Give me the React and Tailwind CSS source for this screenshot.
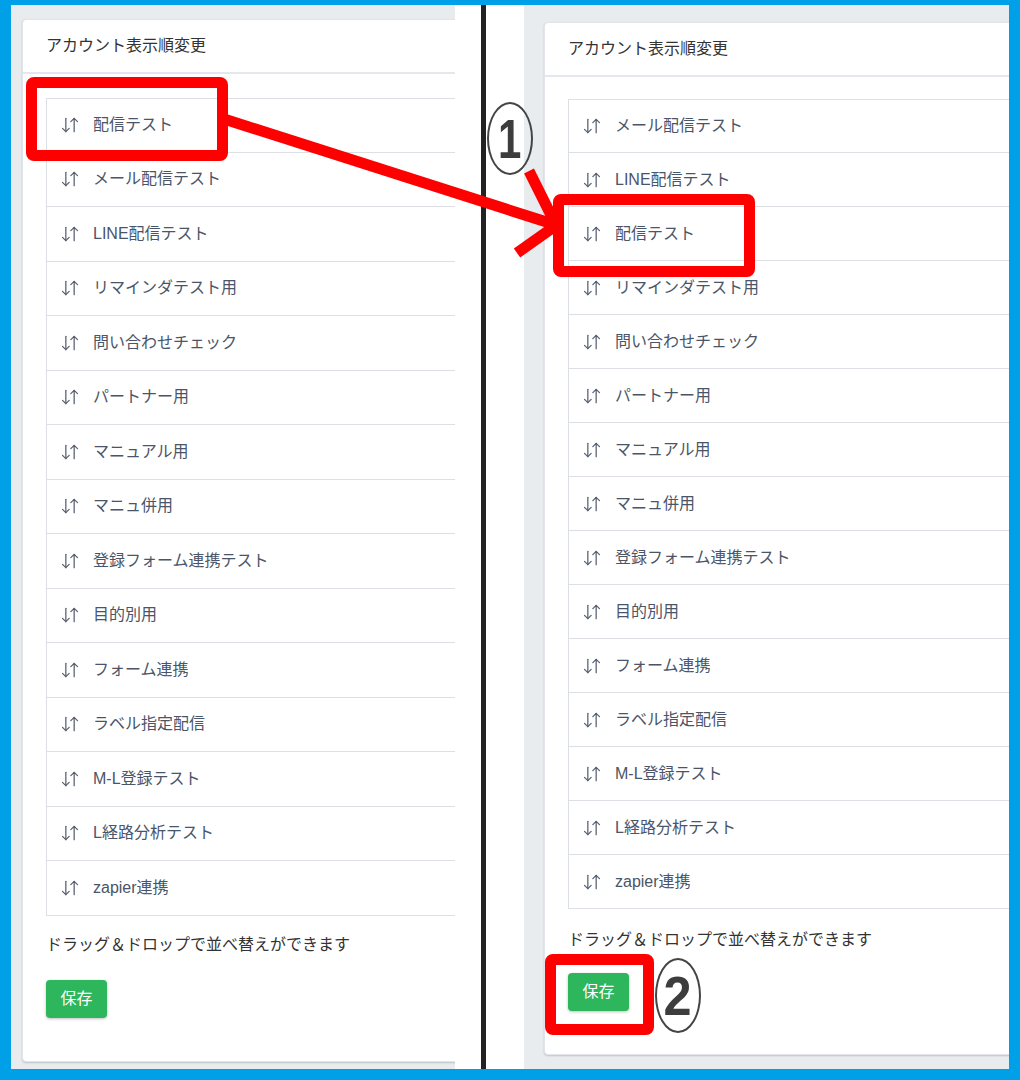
import { ArrowDownUp } from "lucide-react"

const accounts=[
    "配信テスト",
    "メール配信テスト",
    "LINE配信テスト",
    "リマインダテスト用",
    "問い合わせチェック",
    "パートナー用",
    "マニュアル用",
    "マニュ併用",
    "登録フォーム連携テスト",
    "目的別用",
    "フォーム連携",
    "ラベル指定配信",
    "M-L登録テスト",
    "L経路分析テスト",
    "zapier連携",
]

const moved=[accounts[1],accounts[2],accounts[0],...accounts.slice(3)]

const font={fontFamily:'"Liberation Sans", "Noto Sans CJK JP", sans-serif'}

function SortCard({items,rowClass,listClass,noteClass,buttonClass}){
    return(
        <div className="w-[520px] shrink-0 bg-white rounded-[4px] border border-[#e1e4e8] shadow-[0_1px_2px_rgba(0,0,0,0.18)]">
            <div className="h-[54px] px-[23px] flex items-center border-b-2 border-[#e4e7eb] text-[16px] text-[#333]">
                アカウント表示順変更
            </div>
            <div className="px-[23px] pb-[43px]">
                <ul className={listClass}>
                    {items.map((name,i)=>(
                        <li key={name} className={`${rowClass} flex items-center pl-[13px] border-x border-b border-[#dcdfe4] ${i===0?"border-t":""}`}>
                            <ArrowDownUp size={20} strokeWidth={1.5} className="text-[#566070] shrink-0"/>
                            <span className="ml-[13px] text-[16px] text-[#4a5568]">{name}</span>
                        </li>
                    ))}
                </ul>
                <p className={noteClass}>ドラッグ＆ドロップで並べ替えができます</p>
                <button className={buttonClass}>保存</button>
            </div>
        </div>
    )
}

export default function App(){
    return(
        <div style={font} className="relative w-[1020px] h-[1080px] bg-[#00a0e9] pt-[5px] px-[11px] pb-[11px]">
            <div className="flex h-full bg-white">
                <div className="w-[444px] shrink-0 bg-[#e9ecef] overflow-hidden pl-[11px] pt-[14px]">
                    <SortCard
                        items={accounts}
                        rowClass="h-[54.5px]"
                        listClass="mt-[24px]"
                        noteClass="mt-[17px] text-[16px] leading-[24px] text-[#333]"
                        buttonClass="mt-[23px] w-[61px] h-[38px] rounded-[4px] bg-[#2eb65d] text-white text-[16px] shadow-[0_1px_3px_rgba(0,0,0,0.25)]"
                    />
                </div>
                <div className="w-[26px] shrink-0"/>
                <div className="w-[5px] shrink-0 bg-[#222]"/>
                <div className="w-[38px] shrink-0"/>
                <div className="flex-1 bg-[#e9ecef] overflow-hidden pl-[20px] pt-[17px]">
                    <SortCard
                        items={moved}
                        rowClass="h-[54px]"
                        listClass="mt-[22px]"
                        noteClass="mt-[19px] text-[16px] leading-[24px] text-[#333]"
                        buttonClass="mt-[21px] w-[61px] h-[38px] rounded-[4px] bg-[#2eb65d] text-white text-[16px] shadow-[0_1px_3px_rgba(0,0,0,0.25)]"
                    />
                </div>
            </div>

            {/* annotations */}
            <svg className="absolute left-0 top-0 pointer-events-none" width="1020" height="1080">
                <g stroke="#ff0000" strokeWidth="11" fill="none">
                    <line x1="224" y1="119" x2="556" y2="225"/>
                    <line x1="529" y1="171" x2="557" y2="227"/>
                    <line x1="517" y1="253" x2="558" y2="224"/>
                </g>
            </svg>
            <div className="absolute left-[26px] top-[77px] w-[202px] h-[84px] border-[11px] border-[#ff0000] rounded-[8px]"/>
            <div className="absolute left-[553px] top-[194px] w-[202px] h-[83px] border-[11px] border-[#ff0000] rounded-[8px]"/>
            <div className="absolute left-[545px] top-[954px] w-[109px] h-[81px] border-[11px] border-[#ff0000] rounded-[8px]"/>
            <div className="absolute left-[487px] top-[102px] w-[46px] h-[73px] rounded-[50%] border-[2.5px] border-[#444] flex items-center justify-center">
                <span className="text-[56px] leading-none font-bold text-[#3d3d3d] scale-x-75">1</span>
            </div>
            <div className="absolute left-[655px] top-[958px] w-[46px] h-[75px] rounded-[50%] border-[2.5px] border-[#444] flex items-center justify-center">
                <span className="text-[56px] leading-none font-bold text-[#3d3d3d] scale-x-90">2</span>
            </div>
        </div>
    )
}
